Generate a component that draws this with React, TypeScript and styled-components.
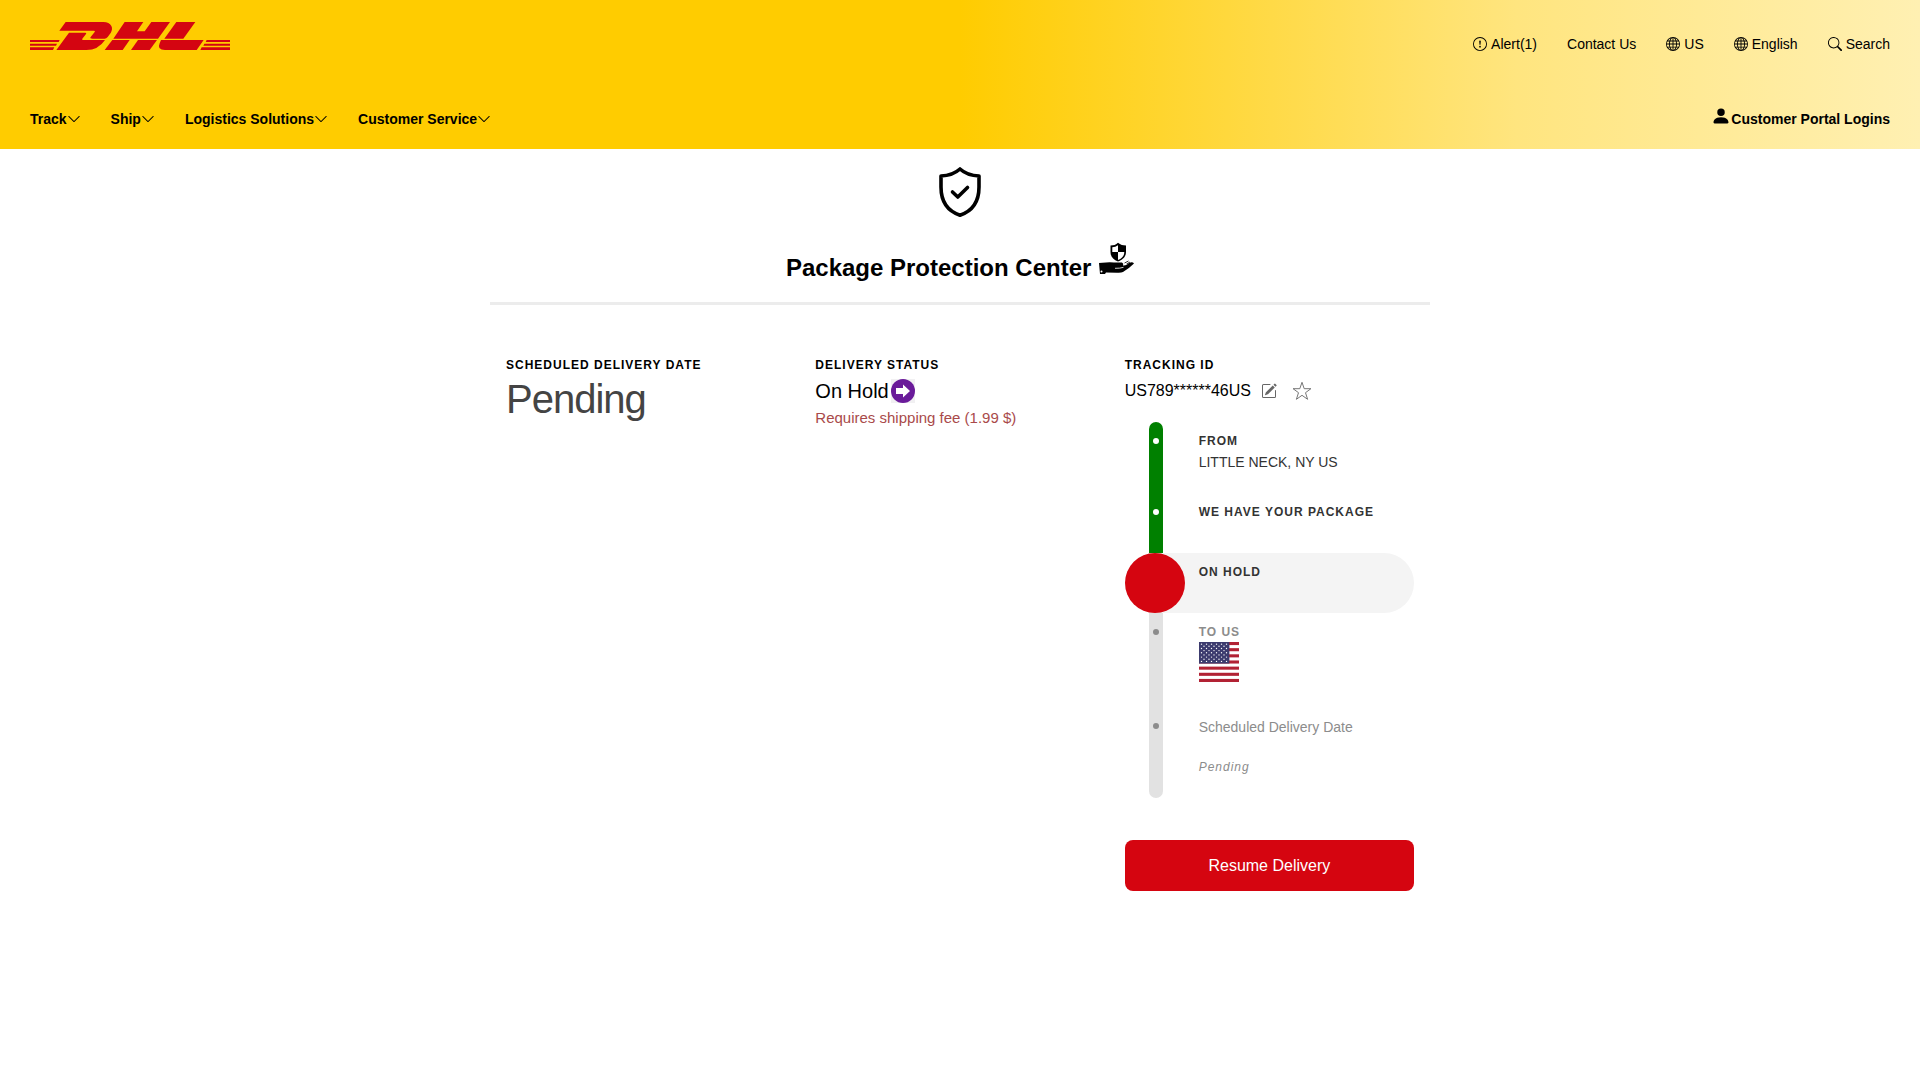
import React from "react";
import styled, { createGlobalStyle } from "styled-components";
import {
  BsChevronDown,
  BsExclamationCircle,
  BsGlobe,
  BsPencilSquare,
  BsPersonFill,
  BsSearch,
} from "react-icons/bs";

const GlobalStyle = createGlobalStyle`
  *, *::before, *::after { box-sizing: border-box; }
  body {
    margin: 0;
    background: #fff;
    color: #000;
    font-family: "Liberation Sans", Arial, sans-serif;
    font-size: 14px;
    line-height: 20px;
  }
  h1, h2, p, ul, ol { margin: 0; padding: 0; }
  ul, ol { list-style: none; }
  svg { display: block; flex: none; }
`;

/* ---------- header ---------- */

const Header = styled.header`
  padding: 22px 30px 17px;
  background: linear-gradient(90deg, #ffcc00 0%, #ffcc00 50%, #ffe57f 79%, #fff0b2 100%);
`;

const TopBar = styled.div`
  display: flex;
  justify-content: space-between;
  align-items: flex-start;
`;

const UtilityList = styled.ul`
  display: flex;
  gap: 30px;
  padding-top: 12px;
`;

const UtilityLink = styled.a`
  display: flex;
  align-items: center;
  gap: 4px;
  color: #000;
  text-decoration: none;
`;

const MainBar = styled.div`
  display: flex;
  justify-content: space-between;
  margin-top: 52px;
`;

const MainNav = styled.nav`
  display: flex;
  gap: 30px;
`;

const NavButton = styled.button`
  display: flex;
  align-items: center;
  padding: 0;
  border: 0;
  background: none;
  color: #000;
  font: inherit;
  font-weight: 700;
  line-height: 26px;
  cursor: pointer;
`;

const LoginLink = styled.a`
  display: flex;
  align-items: flex-start;
  color: #000;
  font-weight: 700;
  line-height: 26px;
  text-decoration: none;
`;

/* ---------- page ---------- */

const Main = styled.main`
  width: 100%;
  max-width: 940px;
  margin: 0 auto;
  padding-top: 18px;
`;

const TitleBlock = styled.div`
  display: flex;
  flex-direction: column;
  align-items: center;
  gap: 23px;
  padding-bottom: 16px;
  border-bottom: 3px solid #ececec;
`;

const Title = styled.h1`
  font-size: 24px;
  line-height: 36px;
  text-align: center;

  svg {
    display: inline-block;
    vertical-align: baseline;
  }
`;

const Columns = styled.div`
  display: grid;
  grid-template-columns: repeat(3, minmax(0, 1fr));
  gap: 20px;
  padding: 51px 16px;
`;

const Label = styled.h2`
  font-size: 12px;
  line-height: 18px;
  letter-spacing: 1px;
  text-transform: uppercase;
`;

const BigValue = styled.p`
  color: #444;
  font-size: 40px;
  line-height: 50px;
  letter-spacing: -1px;
`;

const ValueRow = styled.div`
  display: flex;
  align-items: center;
  height: 34px;
`;

const StatusText = styled.span`
  margin-right: 2px;
  font-size: 20px;
`;

const FeeNote = styled.p`
  color: #a94a4a;
  font-size: 15px;
`;

const TrackingNumber = styled.span`
  font-size: 16px;
`;

const IconButton = styled.button`
  display: flex;
  margin-left: 10px;
  padding: 0;
  border: 0;
  background: none;
  color: #666;
  cursor: pointer;

  & + & {
    margin-left: 15px;
  }
`;

/* ---------- timeline ---------- */

type StepState = "done" | "current" | "todo";

const Timeline = styled.ol`
  margin-top: 14px;
`;

const Step = styled.li<{ $state: StepState }>`
  display: grid;
  grid-template-columns: 60px 1fr;
  column-gap: 14px;
  border-radius: ${(p) => (p.$state === "current" ? "30px" : "0")};
  background: ${(p) => (p.$state === "current" ? "#f4f4f4" : "transparent")};
  color: ${(p) => (p.$state === "todo" ? "#8c8c8c" : "#333")};
`;

const Rail = styled.span<{ $state: StepState }>`
  width: 14px;
  margin-left: 24px;
  padding: 16px 4px 0;
  background: ${(p) => (p.$state === "done" ? "#008000" : "#e2e2e2")};

  ${Step}:first-child & { border-radius: 7px 7px 0 0; }
  ${Step}:last-child & { border-radius: 0 0 7px 7px; }
`;

const Dot = styled.span<{ $state: StepState }>`
  display: block;
  width: 6px;
  height: 6px;
  border-radius: 50%;
  background: ${(p) => (p.$state === "done" ? "#fff" : "#8c8c8c")};
`;

const HoldMarker = styled.span`
  width: 60px;
  height: 60px;
  border-radius: 50%;
  background: #d50510;
`;

const StepBody = styled.div<{ $space: number }>`
  padding: 10px 0 ${(p) => p.$space}px;

  svg { margin-top: 1px; }
`;

const StepText = styled.p`
  ${Label} + & { margin-top: 2px; }
`;

const StepNote = styled.p`
  margin-top: 20px;
  font-size: 12px;
  font-style: italic;
  letter-spacing: 1px;
`;

const ResumeButton = styled.button`
  width: 100%;
  margin-top: 42px;
  padding: 16px 16px 15px;
  border: 0;
  border-radius: 8px;
  background: #d50510;
  color: #fff;
  font: inherit;
  font-size: 16px;
  cursor: pointer;
`;

/* ---------- drawings ---------- */

const Logo = () => (
  <svg width="200" height="28" viewBox="90 66 600 84" fill="#d40511" role="img" aria-label="DHL">
    <path d="M197 66H310C334 66 342 84 332 99L323 111Q319 116 314 116H278Q268 116 272 111L284 96Q287 92 281 92H178Z" />
    <path d="M207 98H255Q261 98 258 102L247 116Q244 120 250 120H315Q295 150 259 150H169Z" />
    <path d="M374 66H430L411 94H434L454 66H510L474 116H340Z" />
    <path d="M337 120H389L368 150H314Z" />
    <path d="M414 120H471L449 150H393Z" />
    <path d="M529 66H586L550 116H493Z" />
    <path d="M483 120H611L590 150H495Q470 150 479 130Z" />
    <path d="M90 120H179L176 126H90ZM90 131H171L168 137H90ZM90 142H163L159 150H90Z" />
    <path d="M620 120H690V126H617ZM613 131H690V137H610ZM605 142H690V150H601Z" />
  </svg>
);

const ShieldIcon = () => (
  <svg width="42" height="50" viewBox="0 0 42 50" fill="none" stroke="#000" strokeWidth="3.6" strokeLinecap="round" strokeLinejoin="round" aria-hidden="true">
    <path d="M21 2C16 6.500 9 8.800 2 9V20C2 34 8.500 44 21 48.200C33.500 44 40 34 40 20V9C33 8.800 26 6.500 21 2Z" />
    <path d="M13.500 25L18.800 30L28.500 20.500" />
  </svg>
);

const HandShieldIcon = () => (
  <svg width="36" height="36" viewBox="-1 0 36 36" aria-hidden="true">
    <path d="M19 2.800C21.500 5 24 5.500 27 5.500V12C27 17 23.500 19.800 19 21.500C14.500 19.800 11.500 17 11.500 12V5.500C14.500 5.500 17 5 19 2.800Z" />
    <path d="M13.300 7.300Q16.500 7 19 5.200V12H13.300ZM19 12H25.300C25.300 16 23 18.400 19 20Z" fill="#fff" />
    <path d="M0 23L7 22.500Q11 22 15 22.600H23Q25 23.500 24 25.500Q27 26 30 23Q33.500 21.500 35 23.500Q30 28.500 24 32Q22 33 18 32.700L7 32.500L6 34H1Z" />
    <path d="M16 28.300Q21 28.500 24.500 27.300" stroke="#fff" strokeWidth="0.800" fill="none" />
    <path d="M25.500 23L29.500 21M27.500 24L31 22" stroke="#000" strokeWidth="0.800" />
    <circle cx="2.500" cy="31.500" r="1" fill="#fff" />
  </svg>
);

const ArrowBadge = () => (
  <svg width="24" height="24" viewBox="0 0 24 24" aria-hidden="true">
    <rect width="24" height="24" fill="#f1f0f2" />
    <circle cx="12" cy="12" r="12" fill="#6a1b9a" />
    <path d="M5 9H12V5.500L19 12L12 18.500V15H5Z" fill="#fff" />
  </svg>
);

const StarIcon = () => (
  <svg width="20" height="20" viewBox="0 0 20 20" fill="none" stroke="currentColor" strokeWidth="0.900" aria-hidden="true">
    <path d="M10 1.300L12.200 7.700H18.900L13.500 11.700L15.600 18.300L10 14.300L4.400 18.300L6.500 11.700L1.100 7.700H7.800Z" />
  </svg>
);

const UnitedStatesFlag = () => {
  const stripe = 40 / 13;
  const stars: React.ReactNode[] = [];
  for (let row = 0; row < 9; row++) {
    for (let col = row % 2; col < 11; col += 2) {
      stars.push(<circle key={`${row}-${col}`} cx={2.5 * (col + 1)} cy={2.154 * (row + 1)} r="0.7" />);
    }
  }
  return (
    <svg width="40" height="40" viewBox="0 0 40 40" role="img" aria-label="United States flag">
      <rect width="40" height="40" fill="#fff" />
      {[0, 2, 4, 6, 8, 10, 12].map((i) => (
        <rect key={i} y={i * stripe} width="40" height={stripe} fill="#b22234" />
      ))}
      <rect width="30.400" height={stripe * 7} fill="#3c3b6e" />
      <g fill="#fff">{stars}</g>
    </svg>
  );
};

/* ---------- content ---------- */

const utilities = [
  { text: "Alert(1)", icon: <BsExclamationCircle size={14} /> },
  { text: "Contact Us", icon: null },
  { text: "US", icon: <BsGlobe size={14} /> },
  { text: "English", icon: <BsGlobe size={14} /> },
  { text: "Search", icon: <BsSearch size={14} /> },
];

const sections = ["Track", "Ship", "Logistics Solutions", "Customer Service"];

export default function App() {
  return (
    <>
      <GlobalStyle />
      <Header>
        <TopBar>
          <a href="#home"><Logo /></a>
          <UtilityList>
            {utilities.map((item) => (
              <li key={item.text}>
                <UtilityLink href="#">{item.icon}{item.text}</UtilityLink>
              </li>
            ))}
          </UtilityList>
        </TopBar>
        <MainBar>
          <MainNav>
            {sections.map((name) => (
              <NavButton key={name} type="button">
                {name}
                <BsChevronDown size={14} />
              </NavButton>
            ))}
          </MainNav>
          <LoginLink href="#login">
            <BsPersonFill size={20} />
            Customer Portal Logins
          </LoginLink>
        </MainBar>
      </Header>

      <Main>
        <TitleBlock>
          <ShieldIcon />
          <Title>Package Protection Center <HandShieldIcon /></Title>
        </TitleBlock>

        <Columns>
          <section>
            <Label>Scheduled Delivery Date</Label>
            <BigValue>Pending</BigValue>
          </section>

          <section>
            <Label>Delivery Status</Label>
            <ValueRow>
              <StatusText>On Hold</StatusText>
              <ArrowBadge />
            </ValueRow>
            <FeeNote>Requires shipping fee (1.99 $)</FeeNote>
          </section>

          <section>
            <Label>Tracking ID</Label>
            <ValueRow>
              <TrackingNumber>US789******46US</TrackingNumber>
              <IconButton type="button" aria-label="Edit"><BsPencilSquare size={16} /></IconButton>
              <IconButton type="button" aria-label="Favorite"><StarIcon /></IconButton>
            </ValueRow>

            <Timeline>
              <Step $state="done">
                <Rail $state="done"><Dot $state="done" /></Rail>
                <StepBody $space={21}>
                  <Label>From</Label>
                  <StepText>LITTLE NECK, NY US</StepText>
                </StepBody>
              </Step>
              <Step $state="done">
                <Rail $state="done"><Dot $state="done" /></Rail>
                <StepBody $space={32}>
                  <Label>We have your package</Label>
                </StepBody>
              </Step>
              <Step $state="current">
                <HoldMarker />
                <StepBody $space={32}>
                  <Label>On Hold</Label>
                </StepBody>
              </Step>
              <Step $state="todo">
                <Rail $state="todo"><Dot $state="todo" /></Rail>
                <StepBody $space={25}>
                  <Label>To US</Label>
                  <UnitedStatesFlag />
                </StepBody>
              </Step>
              <Step $state="todo">
                <Rail $state="todo"><Dot $state="todo" /></Rail>
                <StepBody $space={21}>
                  <StepText>Scheduled Delivery Date</StepText>
                  <StepNote>Pending</StepNote>
                </StepBody>
              </Step>
            </Timeline>

            <ResumeButton type="button">Resume Delivery</ResumeButton>
          </section>
        </Columns>
      </Main>
    </>
  );
}
